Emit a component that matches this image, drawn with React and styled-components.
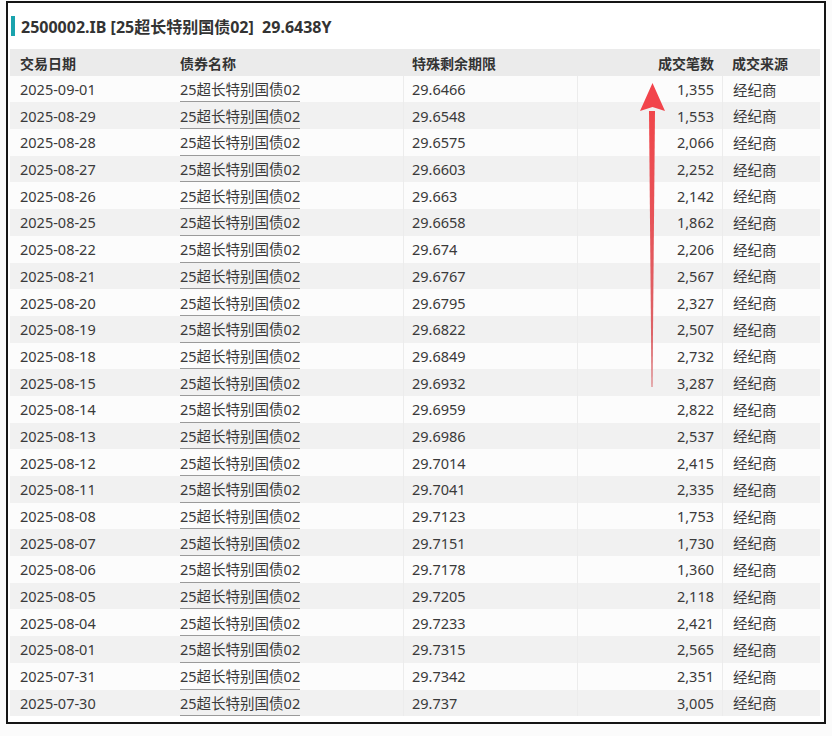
import React from "react";
import styled, { createGlobalStyle } from "styled-components";

const Global = createGlobalStyle`
  html, body { margin: 0; padding: 0; background: #fbfbfb; }
  body { font-family: "Noto Sans", "Noto Sans CJK SC", sans-serif; color: #333; }
`;

const Frame = styled.div`
  position: relative;
  margin: 1px 0 0 6px;
  width: 816px;
  height: 719px;
  border: 2px solid #151515;
  background: #fff;
  box-sizing: content-box;
`;

const TitleBar = styled.div`
  display: flex;
  align-items: center;
  gap: 6px;
  height: 46px;
  padding-left: 3px;
`;

const Accent = styled.span`
  width: 4px;
  height: 20px;
  background: #1aa3ad;
`;

const Title = styled.h1`
  margin: 0;
  font-size: 16px;
  font-weight: 700;
  color: #333;
  font-family: "Noto Sans", "Noto Sans CJK SC", sans-serif;
  white-space: pre;
`;

const Table = styled.div`
  display: grid;
  grid-template-columns: 160px 233px 174px 145px 98px;
  grid-auto-rows: 26.7px;
  margin: 0 4px 0 2px;
  font-size: 14.5px;
`;

const HeadCell = styled.div`
  display: flex;
  align-items: center;
  justify-content: ${(p) => (p.$right ? "flex-end" : "flex-start")};
  padding: ${(p) => (p.$right ? "0 8px 0 0" : `0 0 0 ${p.$pad || 10}px`)};
  background: #ebebeb;
  font-size: 14px;
  font-weight: 700;
  color: #333;
  height: 27px;
`;

const Cell = styled.div`
  display: flex;
  align-items: center;
  justify-content: ${(p) => (p.$right ? "flex-end" : "flex-start")};
  padding: ${(p) => (p.$right ? "0 8px 0 0" : `0 0 0 ${p.$pad || 10}px`)};
  background: ${(p) => (p.$odd ? "#f1f1f1" : "#fcfcfc")};
  border-left: ${(p) => (p.$line ? "1px solid #ececec" : "none")};
  color: #3a3a3a;
  white-space: nowrap;
`;

const NameLink = styled.span`
  align-self: stretch;
  display: flex;
  align-items: center;
  border-bottom: 1px solid #9a9a9a;
  color: #3a3a3a;
`;

const Arrow = styled.svg`
  position: absolute;
  left: 622px;
  top: 76px;
  pointer-events: none;
`;

const rows = [
  ["2025-09-01", "29.6466", "1,355"],
  ["2025-08-29", "29.6548", "1,553"],
  ["2025-08-28", "29.6575", "2,066"],
  ["2025-08-27", "29.6603", "2,252"],
  ["2025-08-26", "29.663", "2,142"],
  ["2025-08-25", "29.6658", "1,862"],
  ["2025-08-22", "29.674", "2,206"],
  ["2025-08-21", "29.6767", "2,567"],
  ["2025-08-20", "29.6795", "2,327"],
  ["2025-08-19", "29.6822", "2,507"],
  ["2025-08-18", "29.6849", "2,732"],
  ["2025-08-15", "29.6932", "3,287"],
  ["2025-08-14", "29.6959", "2,822"],
  ["2025-08-13", "29.6986", "2,537"],
  ["2025-08-12", "29.7014", "2,415"],
  ["2025-08-11", "29.7041", "2,335"],
  ["2025-08-08", "29.7123", "1,753"],
  ["2025-08-07", "29.7151", "1,730"],
  ["2025-08-06", "29.7178", "1,360"],
  ["2025-08-05", "29.7205", "2,118"],
  ["2025-08-04", "29.7233", "2,421"],
  ["2025-08-01", "29.7315", "2,565"],
  ["2025-07-31", "29.7342", "2,351"],
  ["2025-07-30", "29.737", "3,005"],
];

export default function App() {
  return (
    <>
      <Global />
      <Frame>
        <TitleBar>
          <Accent />
          <Title>{"2500002.IB [25超长特别国债02]  29.6438Y"}</Title>
        </TitleBar>
        <Table>
          <HeadCell>交易日期</HeadCell>
          <HeadCell>债券名称</HeadCell>
          <HeadCell $pad={9}>特殊剩余期限</HeadCell>
          <HeadCell $right>成交笔数</HeadCell>
          <HeadCell>成交来源</HeadCell>
          {rows.map(([d, term, n], i) => {
            const odd = i % 2 === 1;
            return (
              <React.Fragment key={d}>
                <Cell $odd={odd}>{d}</Cell>
                <Cell $odd={odd}>
                  <NameLink>25超长特别国债02</NameLink>
                </Cell>
                <Cell $odd={odd} $line $pad={8}>{term}</Cell>
                <Cell $odd={odd} $line $right>{n}</Cell>
                <Cell $odd={odd} $line>经纪商</Cell>
              </React.Fragment>
            );
          })}
        </Table>
        <Arrow width="40" height="315" viewBox="0 0 40 315">
          <defs>
            <linearGradient id="shaft" x1="0" y1="0" x2="0" y2="1">
              <stop offset="0" stopColor="#f0454a" />
              <stop offset="1" stopColor="#d86a6e" />
            </linearGradient>
          </defs>
          <path d="M19 32 L25 32 L22.5 308 L21.5 308 Z" fill="url(#shaft)" />
          <path d="M22.5 4 L35 32 L22.5 28 L10 32 Z" fill="#f2444b" />
        </Arrow>
      </Frame>
    </>
  );
}
